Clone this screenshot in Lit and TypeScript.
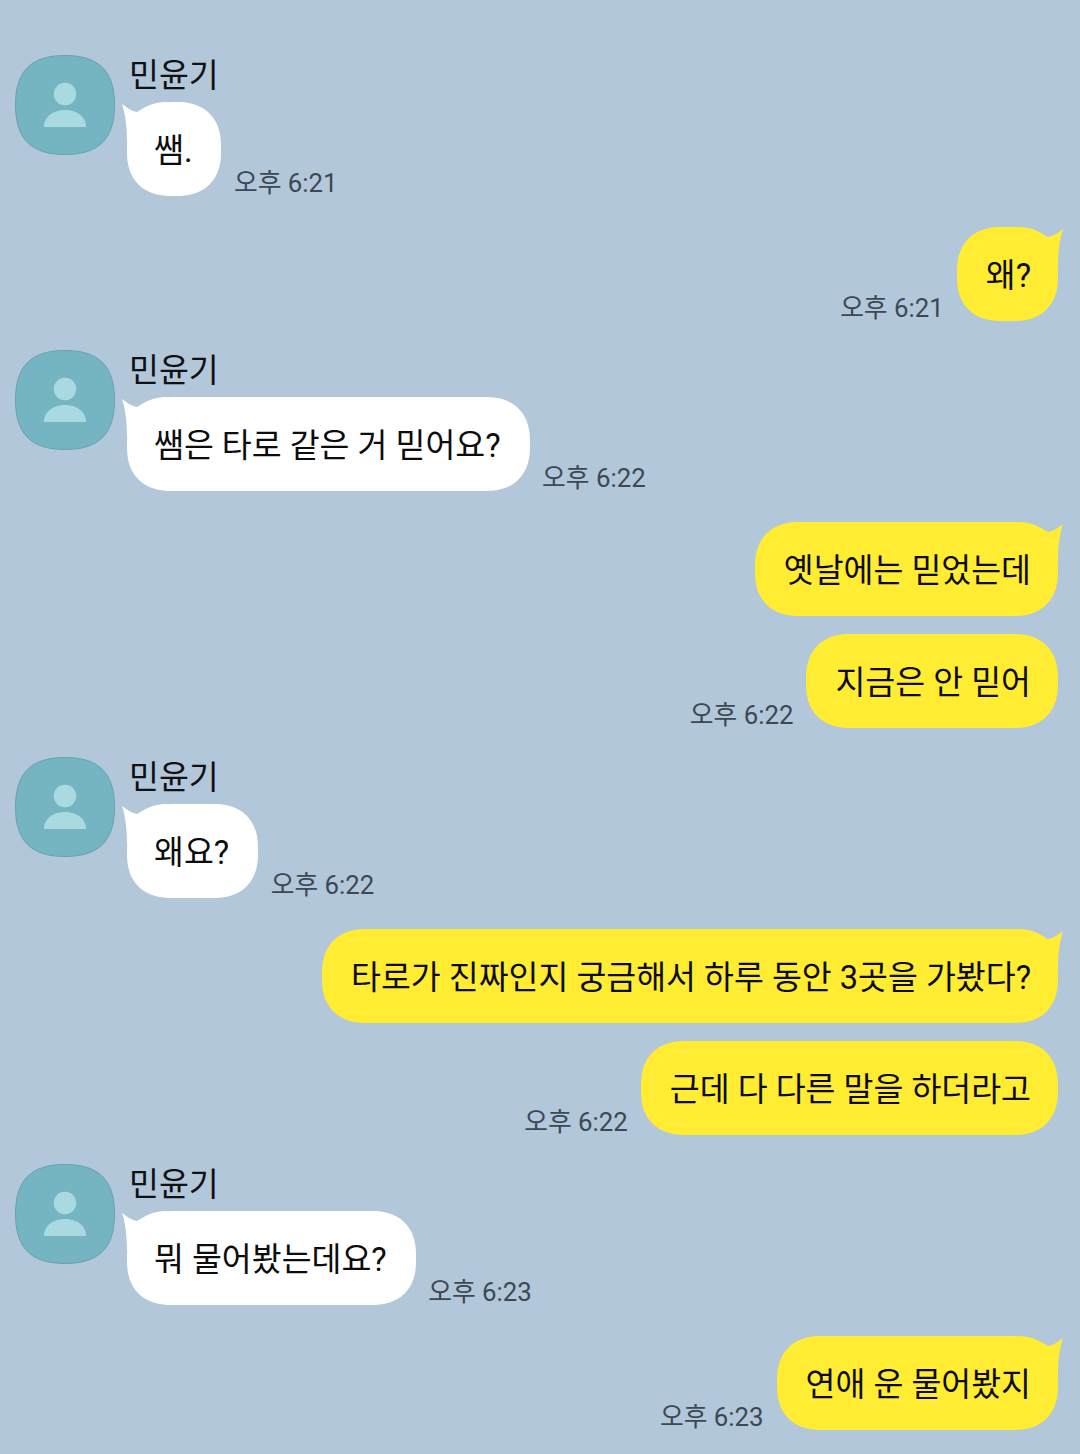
import { LitElement, html, css, svg, nothing } from "lit";
import { customElement, property } from "lit/decorators.js";

type Msg = { text: string; time?: string; tail?: boolean };
type Group = { from: "them" | "me"; msgs: Msg[] };

const NAME = "민윤기";

const GROUPS: Group[] = [
  { from: "them", msgs: [{ text: "쌤.", time: "오후 6:21", tail: true }] },
  { from: "me", msgs: [{ text: "왜?", time: "오후 6:21", tail: true }] },
  { from: "them", msgs: [{ text: "쌤은 타로 같은 거 믿어요?", time: "오후 6:22", tail: true }] },
  {
    from: "me",
    msgs: [
      { text: "옛날에는 믿었는데", tail: true },
      { text: "지금은 안 믿어", time: "오후 6:22" },
    ],
  },
  { from: "them", msgs: [{ text: "왜요?", time: "오후 6:22", tail: true }] },
  {
    from: "me",
    msgs: [
      { text: "타로가 진짜인지 궁금해서 하루 동안 3곳을 가봤다?", tail: true },
      { text: "근데 다 다른 말을 하더라고", time: "오후 6:22" },
    ],
  },
  { from: "them", msgs: [{ text: "뭐 물어봤는데요?", time: "오후 6:23", tail: true }] },
  { from: "me", msgs: [{ text: "연애 운 물어봤지", time: "오후 6:23", tail: true }] },
];

@customElement("chat-avatar")
class ChatAvatar extends LitElement {
  static styles = css`
    :host {
      display: block;
      width: 100px;
      height: 100px;
    }
    svg {
      display: block;
    }
  `;

  render() {
    return html`<svg width="100" height="100" viewBox="0 0 100 100">
      <path
        d="M50 .5C84 .5 99.5 16 99.5 50S84 99.500 50 99.500 .5 84 .5 50 16 .5 50 .5Z"
        fill="#75b5c1"
        stroke="#67a2ae"
      />
      <circle cx="50" cy="39" r="11.200" fill="#a9dae2" />
      <path d="M29 72C29 61 39 55 50 55S71 61 71 72Z" fill="#a9dae2" />
    </svg>`;
  }
}

@customElement("chat-bubble")
class ChatBubble extends LitElement {
  @property({ type: String }) text = "";
  @property({ type: String }) side = "them";
  @property({ type: Boolean }) tail = false;

  static styles = css`
    :host {
      display: block;
      position: relative;
    }
    .bubble {
      height: 94px;
      box-sizing: border-box;
      border-radius: 41px;
      display: flex;
      align-items: center;
      white-space: nowrap;
      font-size: 32.5px;
      color: #0c0c0c;
    }
    .label {
      position: relative;
      z-index: 1;
    }
    @supports (corner-shape: squircle) {
      .bubble {
        border-radius: 44px;
        corner-shape: superellipse(1.2);
      }
      /* the corner under the tail stays round so the notch shows */
      .them.tailed {
        corner-top-left-shape: round;
      }
      .me.tailed {
        corner-top-right-shape: round;
      }
    }
    .them {
      background: #fff;
      padding: 0 29px 3px 27px;
    }
    .me {
      background: #ffec33;
      padding: 0 27px 3px 29px;
    }
    svg {
      position: absolute;
      top: 0;
    }
    .tail-them {
      left: -5px;
    }
    .tail-me {
      right: -5px;
    }
  `;

  render() {
    const tailPath = this.side === "them"
      ? svg`<path d="M0 2C5 6 10 9 15 10C22 6 30 0 45 0V40H5C5 28 4 14 0 2Z" fill="#fff" />`
      : svg`<path d="M50 2C45 6 40 9 35 10C28 6 20 0 5 0V40H45C45 28 46 14 50 2Z" fill="#ffec33" />`;
    return html`
      <div class="bubble ${this.side} ${this.tail ? "tailed" : ""}">
        <span class="label">${this.text}</span>
      </div>
      ${this.tail
        ? html`<svg class="tail-${this.side}" width="50" height="40" viewBox="0 0 50 40">${tailPath}</svg>`
        : nothing}
    `;
  }
}

@customElement("app-root")
class AppRoot extends LitElement {
  static styles = css`
    :host {
      display: block;
      width: 1080px;
      height: 1454px;
      overflow: hidden;
      background: #b2c7da;
      font-family: Roboto, "Noto Sans CJK KR", sans-serif;
    }
    .chat {
      display: flex;
      flex-direction: column;
      padding: 55px 22px 0 15px;
    }
    .them {
      display: flex;
      gap: 12px;
      margin-bottom: 31px;
    }
    .me {
      display: flex;
      flex-direction: column;
      align-items: flex-end;
      gap: 18px;
      margin-bottom: 29px;
    }
    .name {
      height: 47px;
      line-height: 42px;
      margin-left: 2px;
      font-size: 32.5px;
      color: #111;
    }
    .row {
      display: flex;
      align-items: flex-end;
      gap: 12.5px;
    }
    .me .row {
      gap: 13px;
    }
    .time {
      font-size: 25.8px;
      line-height: 26px;
      color: #3c4853;
      white-space: nowrap;
    }
  `;

  private renderMsg(m: Msg, side: string) {
    const time = m.time ? html`<span class="time">${m.time}</span>` : nothing;
    const bubble = html`<chat-bubble .text=${m.text} .side=${side} .tail=${!!m.tail}></chat-bubble>`;
    return html`<div class="row">${side === "me" ? html`${time}${bubble}` : html`${bubble}${time}`}</div>`;
  }

  render() {
    return html`<div class="chat">
      ${GROUPS.map((g) =>
        g.from === "them"
          ? html`<div class="them">
              <chat-avatar></chat-avatar>
              <div>
                <div class="name">${NAME}</div>
                ${g.msgs.map((m) => this.renderMsg(m, "them"))}
              </div>
            </div>`
          : html`<div class="me">${g.msgs.map((m) => this.renderMsg(m, "me"))}</div>`
      )}
    </div>`;
  }
}

export { ChatAvatar, ChatBubble, AppRoot };
